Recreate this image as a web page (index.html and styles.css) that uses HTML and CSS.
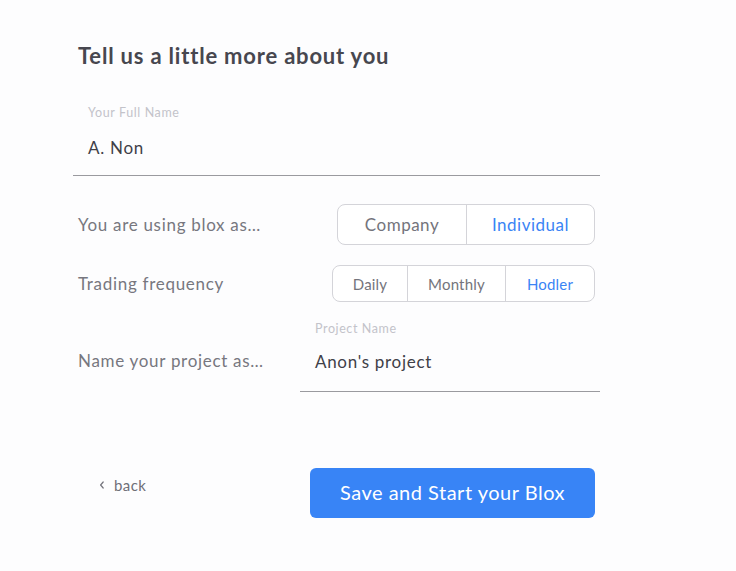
FILE: index.html
```html
<!DOCTYPE html>
<html>
<head>
<meta charset="utf-8">
<link rel="stylesheet" href="styles.css">
</head>
<body>
<div class="page">
  <h1 class="title">Tell us a little more about you</h1>
  <div class="field field-full">
    <div class="field-label">Your Full Name</div>
    <div class="field-value">A. Non</div>
  </div>
  <div class="row row-type">
    <div class="row-label">You are using blox as…</div>
    <div class="seg seg-lg">
      <div class="seg-item seg-company">Company</div>
      <div class="seg-item seg-individual active">Individual</div>
    </div>
  </div>
  <div class="row row-freq">
    <div class="row-label">Trading frequency</div>
    <div class="seg seg-sm">
      <div class="seg-item seg-daily">Daily</div>
      <div class="seg-item seg-monthly">Monthly</div>
      <div class="seg-item seg-hodler active">Hodler</div>
    </div>
  </div>
  <div class="row row-project">
    <div class="row-label">Name your project as…</div>
    <div class="field field-project">
      <div class="field-label">Project Name</div>
      <div class="field-value">Anon's project</div>
    </div>
  </div>
  <div class="footer">
    <div class="back">
      <svg class="chev" width="8" height="10" viewBox="0 0 8 10"><path d="M5.2 2 L2.6 5 L5.2 8" fill="none" stroke="#75757d" stroke-width="1.2" stroke-linecap="round" stroke-linejoin="round"/></svg>
      <span>back</span>
    </div>
    <button class="primary">Save and Start your Blox</button>
  </div>
</div>
</body>
</html>
```
FILE: styles.css
```css
* { box-sizing: border-box; }
html, body { margin: 0; padding: 0; background: #fdfdfe; }
body {
  font-family: Lato, "Noto Sans", "Liberation Sans", sans-serif;
  color: #45454d;
  width: 736px;
  height: 571px;
  letter-spacing: 0.6px;
}
.page {
  width: 527px;
  margin-left: 73px;
  padding-top: 41px;
}
.title {
  margin: 0 0 0 5px;
  font-size: 22px;
  line-height: 30px;
  font-weight: 700;
  color: #47474f;
  letter-spacing: 0.8px;
}
.field-full {
  margin-top: 35px;
  padding-left: 15px;
  height: 70px;
  border-bottom: 1px solid #9a9a9f;
}
.field-label {
  font-size: 12.5px;
  line-height: 14px;
  color: #c3c3ca;
  letter-spacing: 0.6px;
}
.field-value {
  font-size: 17px;
  line-height: 22px;
  color: #404048;
  margin-top: 17px;
  letter-spacing: 0.7px;
}
.row {
  display: flex;
  align-items: center;
  justify-content: space-between;
  padding: 0 5px;
}
.row-label {
  font-size: 17px;
  color: #77777f;
  letter-spacing: 0.7px;
}
.row-type { margin-top: 28px; }
.row-freq { margin-top: 20px; }
.seg {
  display: flex;
  border: 1px solid #d4d4d9;
  border-radius: 8px;
  background: #fff;
}
.seg-item {
  display: flex;
  align-items: center;
  justify-content: center;
  color: #74747c;
  border-left: 1px solid #d4d4d9;
}
.seg-item:first-child { border-left: 0; }
.seg-item.active { color: #3a84f5; }
.seg-lg { height: 41px; font-size: 17px; letter-spacing: 0.5px; }
.seg-lg .seg-item { width: 128px; }
.seg-sm { height: 37px; font-size: 15px; letter-spacing: 0.2px; }
.seg-daily { width: 74px; }
.seg-monthly { width: 98px; }
.seg-hodler { width: 89px; }
.row-project {
  margin-top: 20px;
  padding-right: 0;
  align-items: flex-start;
}
.row-project .row-label { margin-top: 28px; }
.field-project {
  width: 300px;
  height: 70px;
  padding-left: 15px;
  border-bottom: 1px solid #9a9a9f;
}
.field-project .field-value { margin-top: 15px; }
.footer {
  display: flex;
  align-items: flex-start;
  justify-content: space-between;
  padding: 0 5px 0 25px;
  margin-top: 76px;
}
.back {
  display: flex;
  align-items: center;
  gap: 8px;
  font-size: 15px;
  color: #6f6f77;
  margin-top: 8px;
  letter-spacing: 0.4px;
}
.chev { display: block; }
.primary {
  width: 285px;
  height: 50px;
  border: 0;
  border-radius: 6px;
  background: #3884f6;
  color: #fff;
  font-family: Lato, "Noto Sans", "Liberation Sans", sans-serif;
  font-size: 20px;
  letter-spacing: 0.5px;
  padding: 0 0 3px 0;
}
```
